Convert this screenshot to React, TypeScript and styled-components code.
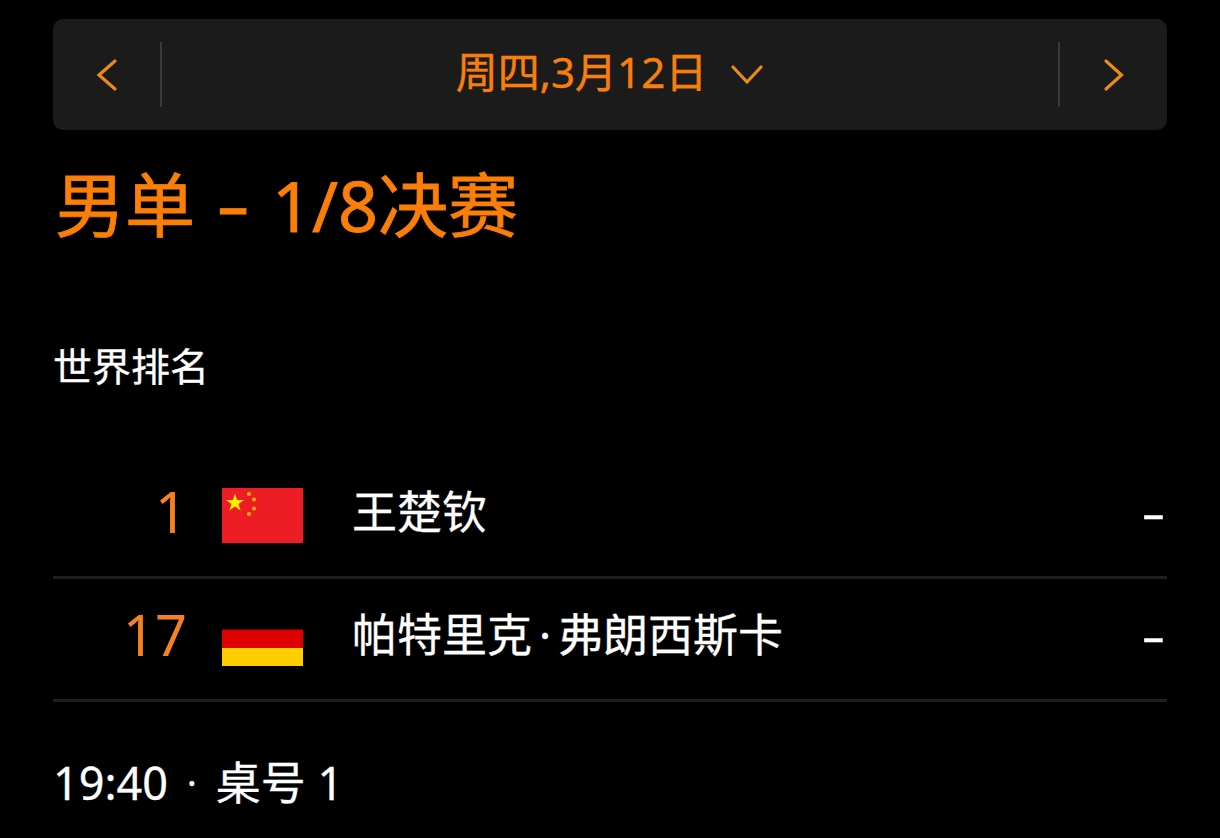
import styled, { createGlobalStyle } from 'styled-components'

const GlobalStyle = createGlobalStyle`
  html, body {
    margin: 0;
    background: #000;
  }
  body {
    font-family: "Noto Sans", "Noto Sans CJK SC", sans-serif;
  }
`

const Page = styled.div`
  width: 1220px;
  height: 838px;
  box-sizing: border-box;
  padding: 19px 53px 0;
  background: #000;
  color: #fff;
  overflow: hidden;
`

const DateBar = styled.div`
  display: flex;
  align-items: center;
  height: 111px;
  border-radius: 10px;
  background: #1b1b1b;
`

const NavButton = styled.div<{ $side: 'left' | 'right' }>`
  flex: none;
  display: flex;
  align-items: center;
  justify-content: center;
  width: 109px;
  height: 65px;
  box-sizing: border-box;
  border-${(p) => (p.$side === 'left' ? 'right' : 'left')}: 2px solid #3a3a3a;
`

const DateLabel = styled.div`
  flex: 1;
  display: flex;
  align-items: center;
  justify-content: center;
  gap: 23px;
  color: #f97f0c;
  font-size: 42px;
  line-height: 1;
`

const DateText = styled.span`
  margin-bottom: 6px;
  -webkit-text-stroke: 0.4px #f97f0c;
`

const Chevron = styled.svg`
  display: block;
  fill: none;
  stroke: #ea8a1c;
  stroke-width: 3.2;
  stroke-linecap: round;
  stroke-linejoin: miter;
`

const Title = styled.h1`
  margin: 35px 0 0 2px;
  color: #fb7e06;
  font-size: 70px;
  font-weight: 400;
  line-height: 80px;
  -webkit-text-stroke: 0.8px #fb7e06;
`

const TitleDash = styled.span`
  display: inline-block;
  margin: 0 9px;
  transform: translateY(-2px) scaleX(1.5);
`

const SectionLabel = styled.div`
  margin-top: 96px;
  font-size: 39px;
  line-height: 50px;
  -webkit-text-stroke: 0.3px #fff;
`

const Players = styled.div`
  margin-top: 65px;
`

const PlayerRow = styled.div`
  display: flex;
  align-items: center;
  height: 123px;
  box-sizing: border-box;
  border-bottom: 3px solid #1f1f1f;
`

const Rank = styled.div`
  flex: none;
  width: 134px;
  margin-bottom: 10px;
  color: #f5821f;
  font-size: 56px;
  font-weight: 400;
  line-height: 1;
  text-align: right;
`

const Flag = styled.svg`
  flex: none;
  display: block;
  margin-left: 35px;
  margin-bottom: 2px;
`

const Name = styled.div`
  flex: 1;
  margin-left: 49px;
  margin-bottom: 10px;
  font-size: 45px;
  line-height: 1;
  -webkit-text-stroke: 0.3px #fff;
`

const NameDot = styled.span`
  margin: 0 7px;
`

const Score = styled.div`
  flex: none;
  margin-right: 2px;
  margin-bottom: 8px;
  font-size: 44px;
  line-height: 1;
  -webkit-text-stroke: 0.5px #fff;
  transform: scaleX(1.65);
  transform-origin: right center;
`

const MatchInfo = styled.div`
  margin-top: 53px;
  display: flex;
  align-items: center;
  font-size: 45px;
  line-height: 56px;
  -webkit-text-stroke: 0.3px #fff;
`

const Dot = styled.span`
  margin: 0 19px;
  font-size: 36px;
`

function ChinaFlag() {
  return (
    <Flag width="81" height="55" viewBox="0 0 81 55">
      <rect width="81" height="55" fill="#ee1c25" />
      <polygon
        points="13,5.5 15.1,11.9 22,11.9 16.5,15.9 18.6,22.4 13,18.4 7.4,22.4 9.5,15.9 4,11.9 10.9,11.9"
        fill="#ffee00"
      />
      <circle cx="27" cy="6" r="2" fill="#ffb400" />
      <circle cx="32" cy="11.5" r="2" fill="#ffb400" />
      <circle cx="32" cy="20.5" r="2" fill="#ffb400" />
      <circle cx="27" cy="26" r="2" fill="#ffb400" />
    </Flag>
  )
}

function GermanyFlag() {
  return (
    <Flag width="81" height="55" viewBox="0 0 81 55">
      <rect width="81" height="18.5" fill="#000" />
      <rect y="18.5" width="81" height="18.5" fill="#dd0000" />
      <rect y="37" width="81" height="18" fill="#ffce00" />
    </Flag>
  )
}

export default function App() {
  return (
    <>
      <GlobalStyle />
      <Page>
        <DateBar>
          <NavButton $side="left">
            <Chevron width="22" height="36" viewBox="0 0 22 36">
              <path d="M19 4 L3 18 L19 32" />
            </Chevron>
          </NavButton>
          <DateLabel>
            <DateText>周四,3月12日</DateText>
            <Chevron width="34" height="24" viewBox="0 0 34 24">
              <path d="M3 4 L17 19 L31 4" />
            </Chevron>
          </DateLabel>
          <NavButton $side="right">
            <Chevron width="22" height="36" viewBox="0 0 22 36">
              <path d="M3 4 L18.5 18 L3 32" />
            </Chevron>
          </NavButton>
        </DateBar>
        <Title>
          男单 <TitleDash>-</TitleDash> 1/8决赛
        </Title>
        <SectionLabel>世界排名</SectionLabel>
        <Players>
          <PlayerRow>
            <Rank>1</Rank>
            <ChinaFlag />
            <Name>王楚钦</Name>
            <Score>-</Score>
          </PlayerRow>
          <PlayerRow>
            <Rank>17</Rank>
            <GermanyFlag />
            <Name>
              帕特里克<NameDot>·</NameDot>弗朗西斯卡
            </Name>
            <Score>-</Score>
          </PlayerRow>
        </Players>
        <MatchInfo>
          19:40
          <Dot>·</Dot>
          桌号 1
        </MatchInfo>
      </Page>
    </>
  )
}
